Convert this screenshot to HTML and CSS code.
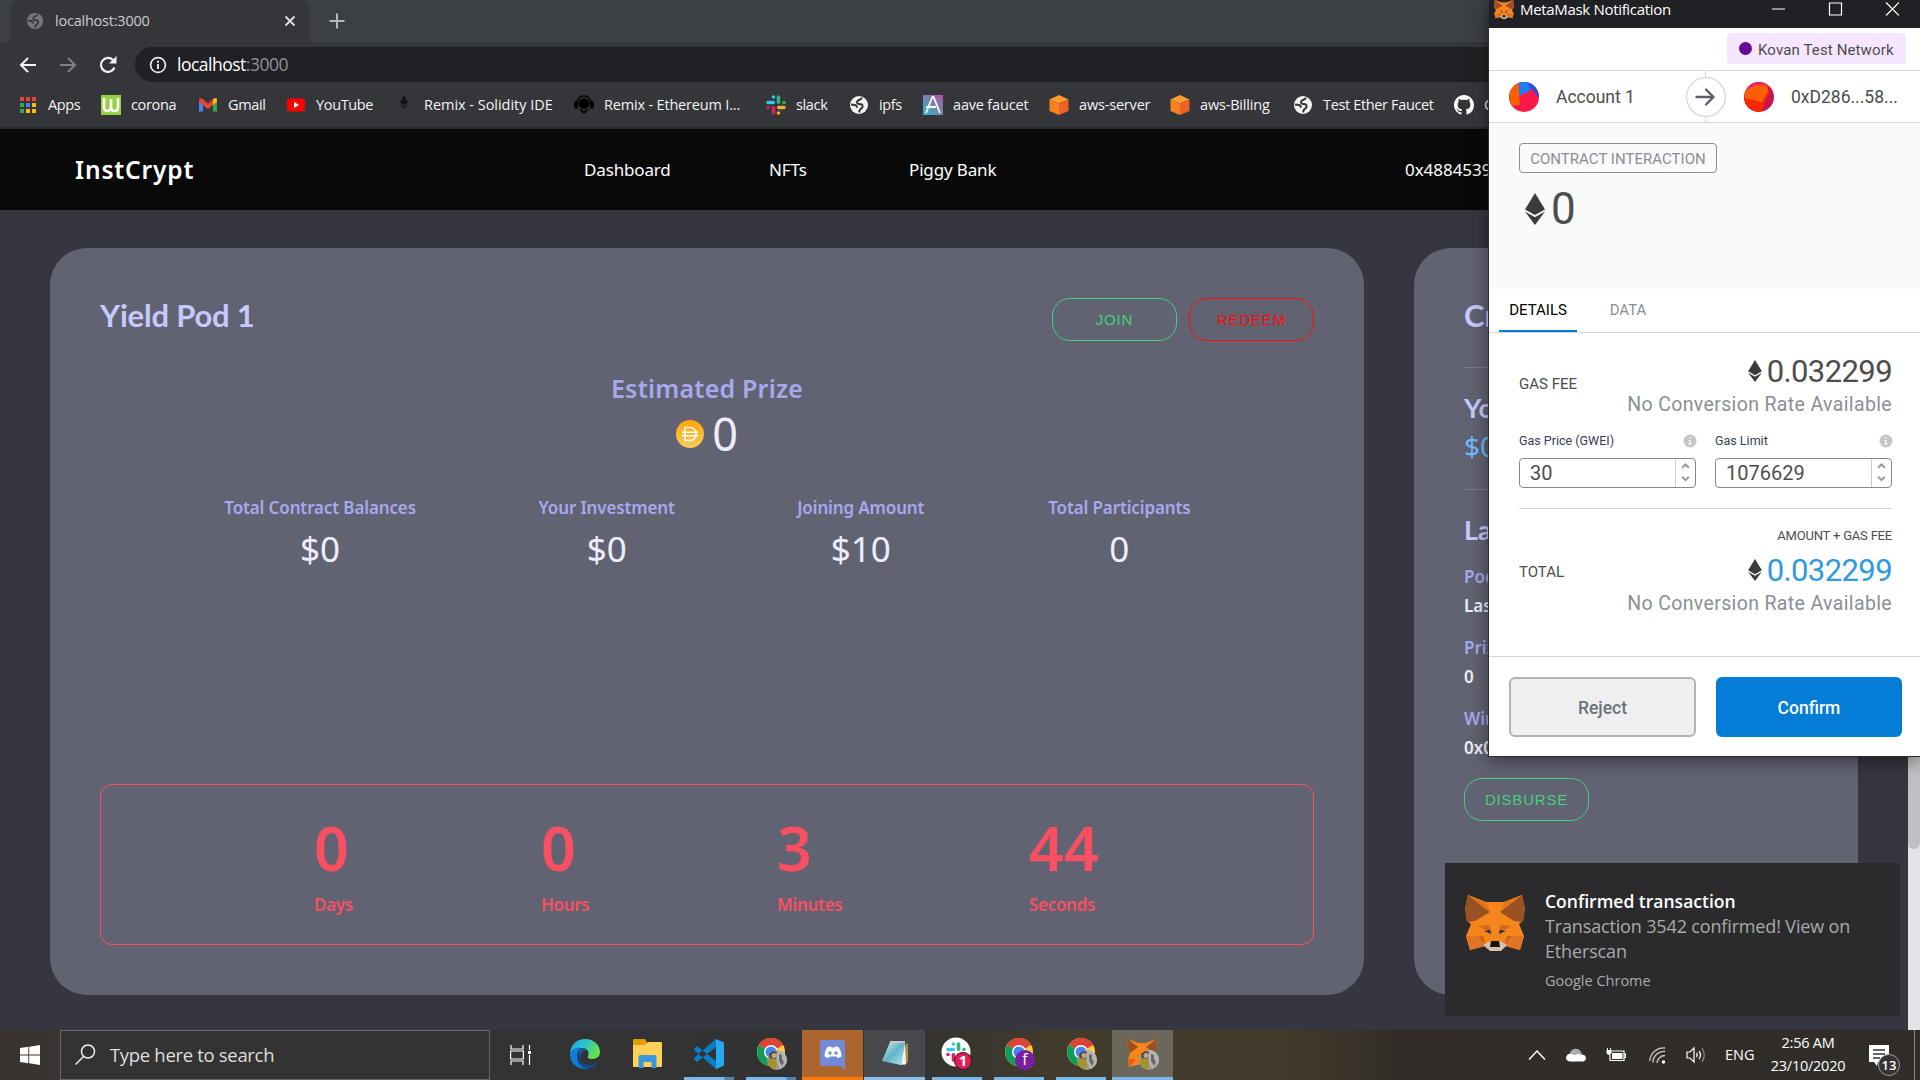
FILE: index.html
```html
<!DOCTYPE html>
<html lang="en">
<head>
<meta charset="utf-8">
<title>InstCrypt</title>
<link rel="stylesheet" href="styles.css">
</head>
<body>
<svg class="defs" width="0" height="0" aria-hidden="true">
  <defs>
    <linearGradient id="gDai" x1="0" y1="0" x2="0" y2="1"><stop offset="0" stop-color="#f9a606"/><stop offset="1" stop-color="#fbcc5f"/></linearGradient>
    <linearGradient id="gAave" x1="0" y1="1" x2="1" y2="0"><stop offset="0" stop-color="#2ebac6"/><stop offset="1" stop-color="#b6509e"/></linearGradient>
    <linearGradient id="gEdge" x1="0" y1="0" x2="1" y2="0.4"><stop offset="0" stop-color="#1aa5e0"/><stop offset="0.5" stop-color="#2bc3d2"/><stop offset="1" stop-color="#63e24b"/></linearGradient>
    <linearGradient id="gNote" x1="0" y1="0" x2="1" y2="1"><stop offset="0" stop-color="#d5f0f4"/><stop offset="0.5" stop-color="#5fb5c8"/><stop offset="1" stop-color="#bfe6ee"/></linearGradient>
  </defs>
  <symbol id="globe" viewBox="0 0 20 20"><circle cx="10" cy="10" r="9" fill="currentColor"/><path d="M12.500 2.500c.5 2-2.500 2-4 3.500-1.300 1.500 0 3 2 3 2.500 0 3.500 1 3 3-.4 1.700-2.500 1.500-3 3.500l-.3 2M2 9.500l4 .5c1.500.3 1.500 1.500 2.500 2.500" fill="none" stroke="var(--hole)" stroke-width="2"/></symbol>
  <symbol id="cube" viewBox="0 0 20 20"><path d="M10 0l9.500 4.500L10 8.500.5 4.500z" fill="#ff9d2e"/><path d="M.5 4.500L10 8.500V20L.5 16z" fill="#f58220"/><path d="M19.500 4.500L10 8.500V20l9.500-4z" fill="#ee6322"/></symbol>
  <symbol id="eth" viewBox="0 0 20 32"><path d="M10 0l10 16.500L10 22 0 16.500z" fill="#393b3d"/><path d="M0 18.500l10 5.700 10-5.700L10 32z" fill="#393b3d"/></symbol>
  <symbol id="fox" viewBox="0 0 60 57">
    <path d="M3 0l18 7h18L57 0l3 14-2 12-4 3 5 12-4 14-14-4-6 5h-9l-6-5-15 4-4-14L6 29l-4-3L0 14z" fill="#f6851b"/>
    <path d="M3 0L0 14l2 13 8-1 15-9zM57 0l3 14-2 13-9-1-14-9z" fill="#9a5224"/>
    <path d="M3 0l18 7 4 10zM57 0L39 7l-4 10z" fill="#e2761b"/>
    <path d="M1 41h17l2 10-15 4zM59 41H42l-2 10 15 4z" fill="#e27525"/>
    <path d="M13 31l11-1 3 8zM47 31l-11-1-3 8z" fill="#d5661e"/>
    <path d="M13 41l5 0 3 9zM47 41h-5l-3 9z" fill="#cd6116"/>
    <path d="M19 36l6-1 1 4zM41 36l-6-1-1 4z" fill="#243447"/>
    <path d="M18 50l7-4h10l7 4-6 6H25z" fill="#d7bfae"/>
    <path d="M26 46h8l1 6H25z" fill="#161616"/>
  </symbol>
  <symbol id="chrome" viewBox="0 0 30 30"><circle cx="15" cy="15" r="14" fill="#ffcd40"/><path d="M15 15L2.900 8A14 14 0 0 1 27.200 8z" fill="#db4437"/><path d="M2.900 8A14 14 0 0 0 14 29l6-11-5-3z" fill="#0f9d58"/><path d="M15 8h12.200A14 14 0 0 0 15 1z" fill="#db4437"/><circle cx="15" cy="15" r="7" fill="#fff"/><circle cx="15" cy="15" r="5.500" fill="#4285f4"/></symbol>
  <symbol id="face" viewBox="0 0 20 20"><circle cx="10" cy="10" r="10" fill="#9a9a99"/><path d="M10 0a10 10 0 0 1 9 14l-6 5-3-7z" fill="#b4b4b4"/><path d="M2 4l4-3 4 1-2 4 1 3-6 1z" fill="#4a4642"/><path d="M1 10l3-2 5 1 1 5-2 6-4-2q-3-3-3-8z" fill="#a8922c"/><circle cx="7" cy="5.500" r="2.500" fill="#c9a483"/><path d="M12 4l3 1 0 4 2 3-2 4-3-5z" fill="#6a6a6a"/></symbol>
  <symbol id="slack" viewBox="0 0 20 20"><g stroke-width="3.600" stroke-linecap="round"><path d="M2 7.500h5.300M7.500 2v0" stroke="#36c5f0"/><path d="M12.500 2v5.300M18 7.500v0" stroke="#2eb67d"/><path d="M18 12.500h-5.300M12.500 18v0" stroke="#ecb22e"/><path d="M7.500 18v-5.300M2 12.500v0" stroke="#e01e5a"/></g></symbol>
  <symbol id="info" viewBox="0 0 14 14"><circle cx="7" cy="7" r="6.500" fill="#c6c6c6"/><path d="M5.500 6h2v3.500h1.200v1H5.300v-1h1V7h-.8zM6.300 3.200h1.500v1.500H6.300z" fill="#fff"/></symbol>
  <symbol id="spin" viewBox="0 0 20 28"><path d="M6.500 8.500L10 5l3.500 3.500M6.500 18l3.500 3.500 3.500-3.500" fill="none" stroke="#9a9a9a" stroke-width="2.200"/></symbol>
</svg>

<div class="browser">
  <div class="tabstrip">
    <div class="tab">
      <svg class="tab-globe" width="18" height="18"><use href="#globe"/></svg>
      <span class="tab-title">localhost:3000</span>
      <svg width="12" height="12" viewBox="0 0 12 12"><path d="M1.500 1.500l9 9M10.500 1.500l-9 9" stroke="#dfe1e5" stroke-width="1.800"/></svg>
    </div>
    <svg class="newtab" width="16" height="16" viewBox="0 0 16 16"><path d="M8 .5v15M.5 8h15" stroke="#b4b7ba" stroke-width="2"/></svg>
  </div>
  <div class="toolbar">
    <svg width="18" height="18" viewBox="0 0 18 18"><path d="M17 9H2.500M9 2L2 9l7 7" fill="none" stroke="#f1f3f4" stroke-width="2"/></svg>
    <svg width="18" height="18" viewBox="0 0 18 18"><path d="M1 9h14.500M9 2l7 7-7 7" fill="none" stroke="#7d8084" stroke-width="2"/></svg>
    <svg width="18" height="18" viewBox="0 0 18 18"><path d="M15.500 11.500A7 7 0 1 1 14 4" fill="none" stroke="#f1f3f4" stroke-width="2.200"/><path d="M17.500 0v7.500H10z" fill="#f1f3f4"/></svg>
    <div class="omnibox">
      <svg width="18" height="18" viewBox="0 0 18 18"><circle cx="9" cy="9" r="7.400" fill="none" stroke="#e8eaed" stroke-width="1.700"/><path d="M9 8v5M9 4.700v2" stroke="#e8eaed" stroke-width="1.900"/></svg>
      <span class="url">localhost<span class="port">:3000</span></span>
    </div>
  </div>
  <div class="bookmarks">
    <div class="bm"><svg width="20" height="20" viewBox="0 0 20 20"><path d="M2 2h4v4H2zM8 2h4v4H8zM14 2h4v4h-4z" fill="#ea4335"/><path d="M2 8h4v4H2z" fill="#34a853"/><path d="M8 8h4v4H8z" fill="#4285f4"/><path d="M14 8h4v4h-4z" fill="#fbbc04"/><path d="M2 14h4v4H2z" fill="#34a853"/><path d="M8 14h4v4H8zM14 14h4v4h-4z" fill="#fbbc04"/></svg>Apps</div>
    <div class="bm"><svg width="20" height="20" viewBox="0 0 20 20"><rect width="20" height="20" fill="#99cf43"/><path d="M3 3v9q0 4 3.500 4t3.500-4V4v8q0 4 3.500 4t3.500-4V3" fill="none" stroke="#fff" stroke-width="2.600"/></svg>corona</div>
    <div class="bm"><svg width="20" height="20" viewBox="0 0 20 20"><path d="M1 6v10.500h4V9z" fill="#4285f4"/><path d="M19 6v10.500h-4V9z" fill="#34a853"/><path d="M1 5q0-2.500 3-1.500l6 5 6-5q3-1 3 1.500v2l-9 7-9-7z" fill="#ea4335"/><path d="M15 4.300l1-.8q3-1 3 1.500v2l-4 3z" fill="#fbbc04"/></svg>Gmail</div>
    <div class="bm"><svg width="20" height="20" viewBox="0 0 20 20"><rect x="1" y="3.500" width="18" height="13" rx="3" fill="#f00"/><path d="M8 7l5 3-5 3z" fill="#fff"/></svg>YouTube</div>
    <div class="bm wide"><svg width="20" height="20" viewBox="0 0 20 20"><path d="M10 0l4 7.500-4 2.500-4-2.500z" fill="#131315"/><path d="M6 8.800l4 2.400 4-2.400L10 14z" fill="#1c1c1f"/></svg>Remix - Solidity IDE</div>
    <div class="bm mid"><svg width="20" height="20" viewBox="0 0 20 20"><path d="M3 8a7 7 0 0 1 14 0" fill="none" stroke="#000" stroke-width="1.500"/><circle cx="10" cy="8.500" r="5.500"/><path d="M4 13l6 6 6-6-6 3z"/><ellipse cx="2" cy="10" rx="2" ry="4"/><ellipse cx="18" cy="10" rx="2" ry="4"/></svg>Remix - Ethereum I...</div>
    <div class="bm"><svg width="20" height="20"><use href="#slack"/></svg>slack</div>
    <div class="bm"><svg width="20" height="20"><use href="#globe"/></svg>ipfs</div>
    <div class="bm mid"><svg width="20" height="20" viewBox="0 0 20 20"><rect width="20" height="20" fill="url(#gAave)"/><path d="M3 18L9 3q1-2 2 0l6 15M3 12h10" fill="none" stroke="#fff" stroke-width="1.800"/></svg>aave faucet</div>
    <div class="bm mid"><svg width="20" height="20"><use href="#cube"/></svg>aws-server</div>
    <div class="bm mid"><svg width="20" height="20"><use href="#cube"/></svg>aws-Billing</div>
    <div class="bm"><svg width="20" height="20"><use href="#globe"/></svg>Test Ether Faucet</div>
    <div class="bm"><svg width="20" height="20" viewBox="0 0 16 16"><path fill="#fff" d="M8 0C3.580 0 0 3.580 0 8c0 3.540 2.290 6.530 5.470 7.590.4.070.55-.17.55-.38 0-.19-.01-.82-.01-1.490-2.010.37-2.530-.49-2.690-.94-.09-.23-.48-.94-.82-1.130-.28-.15-.68-.52-.01-.53.63-.01 1.080.58 1.230.82.72 1.210 1.870.87 2.330.66.070-.52.280-.87.510-1.070-1.780-.2-3.640-.89-3.640-3.950 0-.87.310-1.590.820-2.150-.08-.2-.36-1.020.080-2.120 0 0 .67-.21 2.200.82.640-.18 1.320-.27 2-.27s1.360.09 2 .27c1.530-1.040 2.200-.82 2.200-.82.440 1.100.160 1.920.080 2.120.510.560.820 1.270.820 2.150 0 3.070-1.870 3.750-3.650 3.950.290.250.540.730.540 1.480 0 1.070-.01 1.930-.01 2.200 0 .21.150.46.550.38A8 8 0 0 0 16 8c0-4.420-3.580-8-8-8z"/></svg>C</div>
  </div>
</div>

<nav class="nav">
  <div class="brand">InstCrypt</div>
  <div class="links"><span>Dashboard</span><span>NFTs</span><span>Piggy Bank</span></div>
  <div class="address">0x4884539</div>
</nav>

<main class="page">
  <section class="card pod">
    <div class="pod-head">
      <h2 class="title pod-title">Yield Pod 1</h2>
      <div class="actions"><button class="pill">JOIN</button><button class="pill red">REDEEM</button></div>
    </div>
    <div class="prize-label">Estimated Prize</div>
    <div class="prize"><svg width="28" height="28" viewBox="0 0 28 28"><circle cx="14" cy="14" r="14" fill="url(#gDai)"/><path d="M9 7.500h4.500c4 0 6.500 2.800 6.500 6.500s-2.500 6.500-6.500 6.500H9zM6 12.300h16M6 15.700h16" fill="none" stroke="#fff" stroke-width="1.500"/></svg><span>0</span></div>
    <div class="stats">
      <div class="stat s1"><b>Total Contract Balances</b><span>$0</span></div>
      <div class="stat s2"><b>Your Investment</b><span>$0</span></div>
      <div class="stat s3"><b>Joining Amount</b><span>$10</span></div>
      <div class="stat s4"><b>Total Participants</b><span>0</span></div>
    </div>
    <div class="countdown">
      <div class="unit"><span>0</span><b>Days</b></div>
      <div class="unit"><span>0</span><b>Hours</b></div>
      <div class="unit"><span>3</span><b>Minutes</b></div>
      <div class="unit"><span>44</span><b>Seconds</b></div>
    </div>
  </section>
  <section class="card side">
    <h2 class="title">Cr</h2>
    <hr class="rule">
    <h3 class="title small">Yo</h3>
    <div class="money">$0</div>
    <hr class="rule low">
    <h3 class="title small">La</h3>
    <div class="pair"><b>Pod</b><span>Last</span></div>
    <div class="pair"><b>Priz</b><span>0</span></div>
    <div class="pair"><b>Winn</b><span>0x0</span></div>
    <button class="pill disburse">DISBURSE</button>
  </section>
  <div class="scrollbar"><div class="thumb"></div></div>
</main>

<aside class="wallet">
  <div class="w-bar">
    <svg width="20" height="19"><use href="#fox"/></svg><span>MetaMask Notification</span>
    <svg class="w-ctl" width="127" height="14" viewBox="0 0 127 14"><path d="M0 7h13M57.500 1h12v12h-12zM114 .5l13 13M127 .5l-13 13" fill="none" stroke="#fff" stroke-width="1.200"/></svg>
  </div>
  <div class="w-net"><span class="net"><i></i>Kovan Test Network</span></div>
  <div class="w-acc">
    <svg width="30" height="30" viewBox="0 0 30 30"><circle cx="15" cy="15" r="15" fill="#fc1847"/><path d="M9.500 1A15 15 0 0 1 30 16L23 7z" fill="#2650d8"/><path d="M9.500 1.200A15 15 0 0 1 18 .3L22.500 8 10 14z" fill="#1c7df5"/><path d="M9.500 1A15 15 0 0 0 3 23.500L11 23z" fill="#fb5f02"/></svg>
    <span class="from">Account 1</span>
    <div class="arrow"><svg width="40" height="40" viewBox="0 0 40 40"><circle cx="20" cy="20" r="19.400" fill="#fff" stroke="#d2d8dd" stroke-width="1.200"/><path d="M10.500 20h16M20 12.500l7.500 7.500-7.500 7.500" fill="none" stroke="#5b5d67" stroke-width="2.400" stroke-linecap="round" stroke-linejoin="round"/></svg></div>
    <svg width="30" height="30" viewBox="0 0 30 30"><circle cx="15" cy="15" r="15" fill="#c8144f"/><path d="M2 8A15 15 0 0 1 22 2L3 12z" fill="#fb1479"/><path d="M0 15l26-7-9 21.800A15 15 0 0 1 0 15z" fill="#fb2701"/><path d="M2 8l9-5 12-.5 1 6-6 12-17.500-5Q0 11 2 8z" fill="#fb5f02"/></svg>
    <span class="to">0xD286...58...</span>
  </div>
  <div class="w-sum">
    <span class="badge">CONTRACT INTERACTION</span>
    <div class="zero"><svg width="20" height="32"><use href="#eth"/></svg>0</div>
  </div>
  <div class="w-tabs"><span class="on">DETAILS</span><span>DATA</span></div>
  <div class="w-body">
    <div class="fee">
      <label>GAS FEE</label>
      <div class="amt"><div class="num"><svg width="14" height="22"><use href="#eth"/></svg>0.032299</div><div class="conv">No Conversion Rate Available</div></div>
    </div>
    <div class="gas">
      <div class="field"><div class="flabel">Gas Price (GWEI)<svg width="14" height="14"><use href="#info"/></svg></div><div class="input"><span>30</span><svg width="20" height="28"><use href="#spin"/></svg></div></div>
      <div class="field"><div class="flabel">Gas Limit<svg width="14" height="14"><use href="#info"/></svg></div><div class="input"><span>1076629</span><svg width="20" height="28"><use href="#spin"/></svg></div></div>
    </div>
    <div class="plus">AMOUNT + GAS FEE</div>
    <div class="fee total">
      <label>TOTAL</label>
      <div class="amt"><div class="num blue"><svg width="14" height="22"><use href="#eth"/></svg>0.032299</div><div class="conv">No Conversion Rate Available</div></div>
    </div>
  </div>
  <div class="w-foot"><button class="reject">Reject</button><button class="confirm">Confirm</button></div>
</aside>

<aside class="toast">
  <svg width="60" height="57"><use href="#fox"/></svg>
  <div><div class="t-title">Confirmed transaction</div><div class="t-body">Transaction 3542 confirmed! View on<br>Etherscan</div><div class="t-src">Google Chrome</div></div>
</aside>

<footer class="taskbar">
  <div class="start"><svg width="20" height="20" viewBox="0 0 20 20"><path d="M0 3l8.300-1.200v7.700H0zM9.200 1.700L20 0v9.500H9.200zM0 10.500h8.300v7.700L0 17zM9.200 10.500H20V20L9.200 18.300z" fill="#fff"/></svg></div>
  <div class="search"><svg width="21" height="21" viewBox="0 0 21 21"><circle cx="13" cy="7.500" r="6.500" fill="none" stroke="#eee" stroke-width="1.500"/><path d="M8.500 12.500l-8 8" stroke="#eee" stroke-width="1.500"/></svg><span>Type here to search</span></div>
  <div class="cell view"><svg width="21" height="20" viewBox="0 0 21 20"><path d="M1 0v4h12V0M1 20v-4h12v4M.6 6h12.800v8H.6zM19.500 0v5M19.500 10v10" fill="none" stroke="#fff" stroke-width="1.200"/><path d="M18 6h3v3h-3z" fill="#fff"/></svg></div>
  <div class="cell"><svg width="30" height="30" viewBox="0 0 30 30"><path d="M0 14C1 5 7 0 15 0c9 0 15 6 15 13 0 5-4 7-8 7-3 0-5-1-4-3 2-4-1-8-6-8C7 9 2 10 0 14z" fill="url(#gEdge)"/><path d="M0 14C2 10 7 8 11 9c-3 2-5 7-3 12s6 8 10 8.700C8 31.500-1 24 0 14z" fill="#0f7fd6"/><path d="M11 11c-4 3-3 9 0 12 5 4 12 3 17 0-3 5-8 7.500-12 6.500C7 27 4 17 11 11z" fill="#114a8b"/><path d="M11 9c4 0 7 2 7.500 5-.5-2-3-3.500-5-2-3 2-3 5-2 8-3-3-4-8-.5-11z" fill="#0c59a4"/></svg></div>
  <div class="cell"><svg width="29" height="29" viewBox="0 0 29 29"><path d="M0 1q0-1 1-1h11l2 3v5H0z" fill="#e29b00"/><path d="M0 6h12l3-3h13q1 0 1 1v23q0 1-1 1H1q-1 0-1-1z" fill="#ffd158"/><path d="M5.500 29V18q0-2 2-2h14q2 0 2 2v11h-5v-5q0-1-1-1h-6q-1 0-1 1v5z" fill="#3a97e0"/></svg></div>
  <div class="cell run split"><svg width="30" height="30" viewBox="0 0 30 30"><path d="M0 10l3-3 19 15v8L1 12zM0 20l3 3L22 8V0L1 18z" fill="#0a7dc8"/><path d="M22 0l8 3.500v23L22 30z" fill="#26a7f2"/></svg></div>
  <div class="cell run split"><svg width="34" height="34" viewBox="0 0 34 34"><use href="#chrome" x="2" y="0" width="30" height="30"/><use href="#face" x="13" y="13" width="20" height="20"/></svg></div>
  <div class="cell tile orange"><svg width="26" height="32" viewBox="0 0 26 32"><path d="M3 2h19q3 0 3 3v27l-5-4H3q-3 0-3-3V5q0-3 3-3z" fill="#7289da"/><path d="M7.500 9l3-.8.8 1.300h3.400l.8-1.300 3 .8c2 3 3 6 3 9-1 1.500-3 2-4 2l-1-1.500h-7L8.500 20c-1 0-3-.5-4-2 0-3 1-6 3-9z" fill="#fff"/><circle cx="10" cy="15" r="1.700" fill="#7289da"/><circle cx="16" cy="15" r="1.700" fill="#7289da"/></svg></div>
  <div class="cell tile slate"><svg width="28" height="28" viewBox="0 0 28 28"><path d="M25 3l2 1 0 18-4 4z" fill="#b98a43"/><path d="M9 2h15l-4 23L1 21z" fill="url(#gNote)"/><path d="M24 2l1 22-5 1z" fill="#eef7f8"/><path d="M9 1h15v2H9z" fill="#c8c8c8"/></svg></div>
  <div class="cell run"><svg width="32" height="34" viewBox="0 0 32 34"><circle cx="15" cy="15" r="14.500" fill="#fff"/><use href="#slack" x="5" y="5" width="20" height="20"/><circle cx="22" cy="24" r="8.500" fill="#e01e5a" stroke="#4a1020"/><text x="22" y="29" text-anchor="middle" class="one">1</text></svg></div>
  <div class="cell run"><svg width="34" height="34" viewBox="0 0 34 34"><use href="#chrome" x="2" y="0" width="30" height="30"/><circle cx="23" cy="23" r="10" fill="#7b1fa2"/><text x="23" y="28" text-anchor="middle" class="eff">f</text></svg></div>
  <div class="cell run"><svg width="34" height="34" viewBox="0 0 34 34"><use href="#chrome" x="2" y="0" width="30" height="30"/><use href="#face" x="13" y="13" width="20" height="20"/></svg></div>
  <div class="cell tile pale"><svg width="34" height="34" viewBox="0 0 34 34"><path d="M2 2l10 4h8l10-4 1 7-3 7 2 6-2 6-8-2-9 2-8 2-1-8 2-6-3-7z" fill="#f6851b"/><path d="M2 2l10 8-8 6-3-7zM30 2L20 10l8 6 3-7z" fill="#9a5224"/><path d="M2 22h8l-6 8z" fill="#e2600f"/><use href="#face" x="13" y="13" width="20" height="20"/></svg></div>
  <div class="tray">
    <svg width="18" height="12" viewBox="0 0 18 12"><path d="M1 10.500L9 2l8 8.500" fill="none" stroke="#fff" stroke-width="1.500"/></svg>
    <svg width="20" height="14" viewBox="0 0 20 14"><path d="M4 5a6 6 0 0 1 11-1l2 4-13 3z" fill="#aaa"/><path d="M2 13q-3-2-1.500-5Q2 5 5 6l4 1q4-2 6 0 5-1 5 4-1 2-3 2.500H4z" fill="#fff"/></svg>
    <svg width="20" height="14" viewBox="0 0 20 14"><path d="M4.500 3H18v9.500H4V7M18 6h1.500v3.500H18" fill="none" stroke="#fff" stroke-width="1.200"/><path d="M6 5h10.500v6H6zM.5 2h5v3q-1 2-2.500 2T.5 5zM1 0h1v2H1zM4 0h1v2H4z" fill="#fff"/></svg>
    <svg width="17" height="17" viewBox="0 0 17 17"><path d="M.7 14A14 14 0 0 1 16 1M4 15.500A11 11 0 0 1 16 4.500M8 16A8 8 0 0 1 16 8.500" fill="none" stroke="#c8c8c8" stroke-width="1.300"/><circle cx="14.500" cy="15" r="1.700" fill="#fff"/></svg>
    <svg width="21" height="18" viewBox="0 0 21 18"><path d="M1 6h3l4-4v14l-4-4H1z" fill="none" stroke="#fff" stroke-width="1.200"/><path d="M10.500 7q1.500 2 0 4M13 5q3 4 0 8" fill="none" stroke="#fff" stroke-width="1.300"/><path d="M16 2q4.500 7 0 14" fill="none" stroke="#888" stroke-width="1.300"/></svg>
    <span class="lang">ENG</span>
  </div>
  <div class="clock">2:56 AM<br>23/10/2020</div>
  <svg class="notice" width="32" height="31" viewBox="0 0 32 31"><path d="M0 0h20v17H9l-1 4-3-4H0z" fill="#fff"/><path d="M4 5h12M4 9h12M4 13h7" stroke="#333" stroke-width="1.300"/><circle cx="20" cy="20" r="10.500" fill="#353433" stroke="#999"/><text x="20" y="25" text-anchor="middle" class="thirteen">13</text></svg>
  <div class="peek"></div>
</footer>
</body>
</html>
```
FILE: styles.css
```css
* { box-sizing: border-box; }
body { margin: 0; width: 1920px; height: 1080px; overflow: hidden; display: flex; flex-direction: column; background: #363640; color: #fff; font-family: "Open Sans", "Noto Sans", sans-serif; white-space: nowrap; }
svg { display: block; flex: none; }
.defs { position: absolute; }
button { font: inherit; padding: 0; }
h2, h3 { margin: 0; }

/* browser chrome */
.browser { height: 129px; background: #35363a; border-bottom: 2px solid #292a2d; --hole: #35363a; }
.tabstrip { height: 42px; background: #3c4043; display: flex; align-items: center; padding-left: 10px; gap: 19px; }
.tab { width: 300px; height: 42px; background: #35363a; border-radius: 10px 10px 0 0; display: flex; align-items: center; padding: 0 14px 0 16px; }
.tab-globe { color: #74777b; }
.tab-title { flex: 1; margin-left: 11px; padding-bottom: 2px; font-size: 14.500px; letter-spacing: -0.22px; color: #c9cbce; }
.toolbar { height: 45px; display: flex; align-items: center; padding-left: 19px; gap: 22px; }
.omnibox { flex: 1; height: 35px; margin-left: -4px; background: #202124; border-radius: 18px 0 0 18px; display: flex; align-items: center; padding-left: 14px; gap: 10px; font-size: 17.500px; letter-spacing: -0.5px; }
.url { padding-bottom: 2px; }
.port { color: #8f9194; }
.bookmarks { height: 36px; padding-left: 18px; display: grid; align-items: center; grid-template-columns: 83px 97px 88px 108px 180px 192px 83px 74px 126px 121px 123px 161px 60px; }
.bm { display: flex; gap: 10px; align-items: center; height: 36px; font-size: 14.500px; line-height: 18px; letter-spacing: -0.35px; color: #f1f3f4; }
.mid { letter-spacing: -0.18px; }
.wide { letter-spacing: -0.03px; }

/* site header */
.nav { height: 81px; background: #090909; display: flex; align-items: center; padding-left: 75px; font-family: "Noto Sans", sans-serif; }
.brand { width: 509px; font-size: 24.500px; font-weight: 600; letter-spacing: 0.850px; }
.links { display: grid; grid-template-columns: 185px 140px 496px; font-size: 17px; letter-spacing: -0.15px; }
.address { font-size: 17px; letter-spacing: -0.05px; }

/* page */
.page { height: 820px; display: flex; padding: 38px 0 0 50px; position: relative; }
.card { height: 747px; background: #626372; border-radius: 37px; padding: 50px; display: flex; flex-direction: column; font-family: "Noto Sans", sans-serif; }
.pod { width: 1314px; margin-right: 50px; }
.side { width: 444px; }
.title { font-family: Lato, sans-serif; font-size: 31px; line-height: 34px; height: 36px; font-weight: 700; color: #c5c9ff; }
.pod-title { letter-spacing: -0.2px; }
.small { font-size: 27px; }
.pod-head { display: flex; justify-content: space-between; height: 43px; }
.actions { display: flex; gap: 12px; }
.pill { width: 125px; height: 43px; border: 1px solid #46cf7d; border-radius: 18px; background: none; color: #46cf7d; font-family: "Liberation Sans", sans-serif; font-size: 15px; letter-spacing: 0.8px; }
.red { color: #fb0b0b; border-color: #fb0b0b; }
.prize-label { margin-top: 29px; line-height: 36px; text-align: center; font-size: 25px; letter-spacing: .2px; font-weight: 600; color: #a5a9ee; }
.prize { height: 48px; margin-top: 4px; display: flex; align-items: center; justify-content: center; gap: 8px; font-size: 45px; line-height: 48px; color: #eceeff; }
.stats { margin-top: 38px; display: flex; justify-content: space-evenly; padding-left: 1px; }
.stat { display: flex; flex-direction: column; align-items: center; }
.s1 { width: 193px; } .s2 { width: 135px; } .s3 { width: 128px; } .s4 { width: 144px; }
.stat b { line-height: 24px; font-size: 17px; letter-spacing: -.13px; font-weight: 600; color: #a5a9ee; }
.stat span { margin-top: 5px; line-height: 48px; font-size: 35px; color: #eceeff; }
.countdown { margin-top: auto; height: 161px; border: 1px solid #f94f63; border-radius: 12px; display: grid; grid-template-columns: 227px 236px 252px 100px; padding: 23px 0 0 213px; color: #f94f63; }
.unit span { display: block; font-size: 61px; line-height: 80px; font-weight: 600; }
.unit b { display: block; font-size: 17px; line-height: 24px; margin-top: 5px; font-weight: 600; letter-spacing: -.3px; }
.rule { width: 344px; height: 1px; border: 0; margin: 33px 0 23px; background: #777a8c; flex: none; }
.money { margin-top: 1px; line-height: 36px; height: 38px; font-size: 28px; color: #6cbcff; }
.rule.low { margin: 23px 0 23px; }
.pair { display: flex; flex-direction: column; gap: 7px; margin-top: 20px; font-size: 17px; line-height: 22px; font-weight: 600; color: #eceeff; }
.small + .pair { margin-top: 17px; }
.pair b { font-weight: 600; color: #a5a9ee; }
.disburse { margin-top: 19px; flex: none; }
.scrollbar { position: absolute; right: 0; top: 0; width: 12px; height: 820px; background: #e4e4e4; }
.thumb { height: 639px; background: #c1c1c1; border-radius: 0 0 6px 6px; }

/* wallet window */
.wallet { position: absolute; left: 1489px; top: 0; width: 431px; height: 756px; background: #fff; color: #4d4d4d; font-family: Roboto, sans-serif; box-shadow: 0 4px 18px rgba(0,0,0,.5), 0 0 0 1px #3b3b42; display: flex; flex-direction: column; }
.w-bar { height: 28px; background: #202124; color: #fff; display: flex; align-items: flex-start; padding-left: 5px; gap: 6px; font: 15px/18px "Open Sans", sans-serif; letter-spacing: -0.32px; }
.w-ctl { margin: 2px 21px 0 auto; }
.w-net { height: 43px; border-bottom: 1px solid #d2d8dd; padding: 5px 14px 0 0; }
.net { margin-left: auto; width: 179px; height: 31px; background: #f6e6ff; border-radius: 4px; display: flex; align-items: center; padding-left: 12px; font-size: 15px; letter-spacing: .13px; padding-top: 2px; }
.net i { width: 13px; height: 13px; border-radius: 50%; background: #690496; margin: -2px 6px 0 0; }
.w-acc { height: 52px; border-bottom: 1px solid #d2d8dd; display: grid; align-items: center; grid-template-columns: 47px 130px 58px 47px 1fr; padding-left: 20px; font-size: 17.500px; }
.arrow { height: 51px; width: 40px; display: flex; align-items: center; background: linear-gradient(#d2d8dd, #d2d8dd) 19px 0 / 1px 100% no-repeat; }
.w-sum { height: 166px; background: #f9fafa; padding: 20px 30px 0; }
.badge { display: block; width: 198px; height: 30px; border: 1px solid #8b8f93; border-radius: 4px; color: #8c8e94; font-size: 15px; line-height: 30px; text-align: center; letter-spacing: .03px; }
.zero { display: flex; align-items: center; gap: 6px; height: 48px; margin-top: 12px; padding-left: 6px; font-size: 44px; font-weight: 400; }
.w-tabs { height: 44px; border-bottom: 1px solid #d2d8dd; display: flex; padding-left: 10px; font-size: 15px; color: #8c8e94; }
.w-tabs span { width: 78px; height: 43px; line-height: 42px; text-align: center; margin-right: 12px; }
.w-tabs .on { color: #000; border-bottom: 2px solid #037dd6; }
.w-body { height: 323px; margin: 0 28px 0 30px; }
.fee { height: 98px; padding-top: 20px; display: flex; justify-content: space-between; font-size: 15px; }
.fee label { margin-top: 20px; line-height: 22px; }
.amt { text-align: right; }
.num { height: 38px; display: flex; align-items: center; justify-content: flex-end; gap: 5px; font-size: 31px; letter-spacing: -0.6px; line-height: 38px; }
.num svg { margin-top: -3px; }
.blue { color: #2f9ae0; }
.conv { line-height: 28px; font-size: 19.500px; letter-spacing: .36px; color: #8c8e94; }
.gas { display: flex; gap: 19px; height: 78px; border-bottom: 1px solid #d2d8dd; }
.field { width: 177px; }
.flabel { display: flex; justify-content: space-between; align-items: center; line-height: 22px; font-size: 12.500px; height: 20px; margin: 0 -1px 7px 0; color: #333d54; }
.input { width: 177px; height: 30px; border: 1px solid #888; border-radius: 4px; display: flex; font-size: 20px; line-height: 29px; padding-left: 10px; }
.input span { flex: 1; border-right: 1px solid #ccc; }
.input svg { width: 19px; }
.plus { text-align: right; font-size: 13px; letter-spacing: -.2px; line-height: 20px; margin-top: 17px; }
.total { height: 90px; padding-top: 6px; }
.total label { margin-top: 9px; }
.w-foot { border-top: 1px solid #d2d8dd; padding: 20px 18px 0 20px; display: grid; grid-template-columns: 187px 186px; gap: 20px; }
.w-foot button { height: 60px; border: 2px solid #b3b3b3; border-radius: 6px; background: #efefef; color: #6a737d; font-size: 17.500px; font-weight: 500; padding-top: 2px; }
.w-foot .confirm { background: #037dd6; border-color: #037dd6; color: #fff; }

/* notification toast */
.toast { position: absolute; left: 1445px; top: 863px; width: 455px; height: 153px; background: #2b2b2e; display: flex; gap: 20px; padding: 26px 20px; }
.toast svg { margin-top: 6px; }
.t-title { font-size: 17.500px; font-weight: 600; line-height: 25px; }
.t-body { font-size: 18px; line-height: 25px; color: #a9a9ab; letter-spacing: -.15px; }
.t-src { font-size: 14.500px; line-height: 20px; margin-top: 7px; color: #a9a9ab; }

/* taskbar */
.taskbar { height: 50px; display: flex; background: linear-gradient(90deg, #39332f 0, #3a3532 60px, #333 490px, #323232 900px, #413b2b 1050px, #433b2b 1280px, #322d28 1400px, #302d2a 1920px); }
.start { width: 60px; display: flex; align-items: center; padding-left: 20px; }
.search { width: 430px; border: 1px solid #686868; background: #333; display: flex; align-items: center; gap: 14px; padding: 0 0 2px 14px; font-size: 18.500px; letter-spacing: -.32px; color: #dedede; }
.cell { width: 62px; height: 50px; display: flex; align-items: center; justify-content: center; border-bottom: 3px solid transparent; }
.view { width: 64px; padding: 2px 4px 0 0; }
.run { background: linear-gradient(#76b9ed, #76b9ed) 50% 100% / 50px 3px no-repeat border-box; }
.split { background: linear-gradient(90deg, #76b9ed 40px, #4f83ab 41px) 50% 100% / 50px 3px no-repeat border-box; }
.tile { width: 61px; margin-right: 1px; border-color: #86bfee; }
.orange { background: #ad652e; border-color: #ff7800; }
.slate { background: #47494c; }
.pale { background: #6b675a; border-color: #76b9ed; }
.one { font: bold 15px "Open Sans", sans-serif; fill: #fff; }
.eff { font: 16px "Open Sans", sans-serif; fill: #fff; }
.thirteen { font: 600 13px "Open Sans", sans-serif; fill: #fff; }
.tray { margin-left: auto; display: grid; grid-template-columns: 38px 40px 43px 37px 39px 29px; align-items: center; font-size: 14.500px; }
.lang { padding-bottom: 1px; }
.clock { width: 108px; text-align: center; font-size: 14.500px; line-height: 23px; padding-top: 1px; letter-spacing: -.25px; }
.notice { margin: 15px 0 0 7px; }
.peek { width: 6px; border-left: 1px solid #8a8a88; margin-left: 13px; }
```
